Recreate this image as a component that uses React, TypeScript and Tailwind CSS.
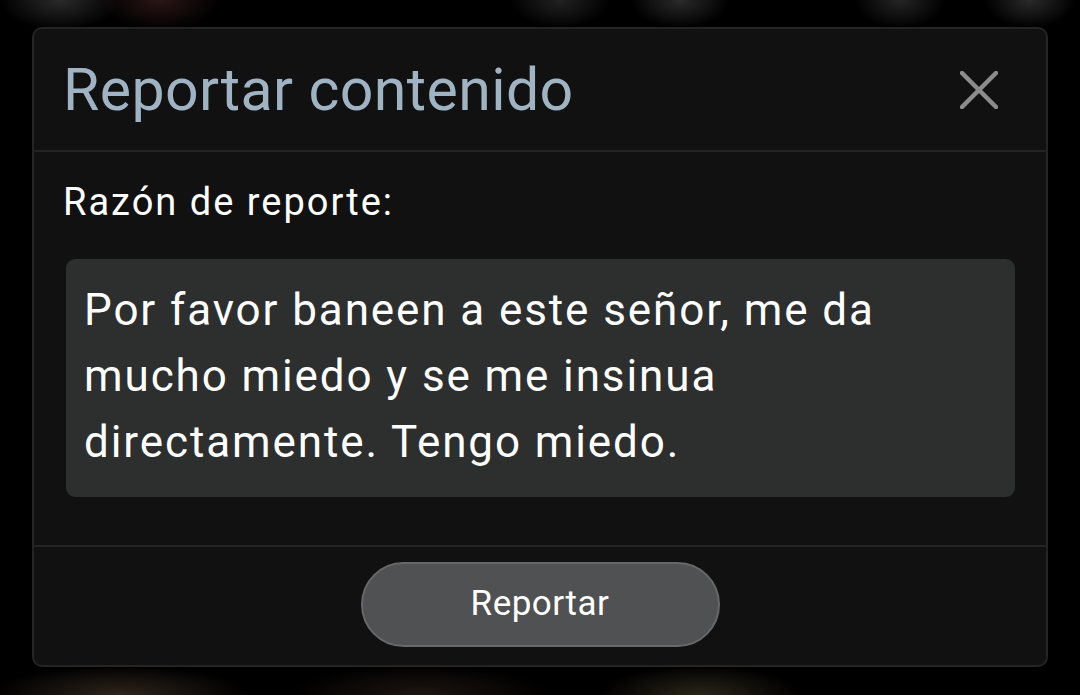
import { useState } from 'react';

const reportText =
  'Por favor baneen a este señor, me da mucho miedo y se me insinua directamente. Tengo miedo.';

function CloseIcon() {
  return (
    <svg width="38" height="38" viewBox="0 0 38 38" fill="none" aria-hidden="true">
      <path d="M2 2L36 36M36 2L2 36" stroke="#8c8c8c" strokeWidth="4.5" strokeLinecap="round" />
    </svg>
  );
}

export default function App() {
  const [open, setOpen] = useState(true);

  return (
    <div
      className="h-[695px] w-[1080px] overflow-hidden bg-black bg-[radial-gradient(ellipse_60px_30px_at_60px_0px,#2a2a2a,transparent),radial-gradient(ellipse_60px_30px_at_160px_0px,#2a1515,transparent),radial-gradient(ellipse_50px_28px_at_560px_0px,#222,transparent),radial-gradient(ellipse_50px_28px_at_680px_0px,#2a2a2a,transparent),radial-gradient(ellipse_45px_28px_at_900px_0px,#252525,transparent),radial-gradient(ellipse_45px_28px_at_1030px_0px,#2a2a2a,transparent),radial-gradient(ellipse_130px_30px_at_120px_695px,#2e241b,transparent),radial-gradient(ellipse_130px_30px_at_420px_695px,#1e1510,transparent),radial-gradient(ellipse_100px_30px_at_700px_695px,#2b2519,transparent)] pl-[32px] pt-[27px]"
      style={{ fontFamily: 'Roboto, "Noto Sans", "Liberation Sans", sans-serif' }}
    >
      {open ? (
        <section className="w-[1016px] overflow-hidden rounded-[10px] border-2 border-[#242424] bg-[#111111]">
          <header className="flex h-[123px] items-center justify-between border-b-2 border-[#232323] pl-[29px] pr-[48px]">
            <h2 className="text-[59px] font-normal leading-[70px] tracking-[0.4px] text-[#9fb3c3]">
              Reportar contenido
            </h2>
            <button type="button" aria-label="Cerrar" onClick={() => setOpen(false)}>
              <CloseIcon />
            </button>
          </header>

          <div className="border-b-2 border-[#232323] pb-[48px] pl-[29px] pr-[31px] pt-[28px]">
            <p className="text-[38px] leading-[44px] tracking-[2px] text-white">Razón de reporte:</p>
            <div className="ml-[3px] mt-[35px] h-[238px] rounded-[9px] bg-[#2d2e2e] pl-[18px] pr-[22px] pt-[18px] text-[44px] leading-[66px] tracking-[1.9px] text-white">
              {reportText}
            </div>
          </div>

          <footer className="flex justify-center pb-[18px] pt-[15px]">
            <button
              type="button"
              className="h-[85px] w-[359px] rounded-full border-2 border-[#686868] bg-[#505152] text-[35px] tracking-[0.5px] text-white"
            >
              Reportar
            </button>
          </footer>
        </section>
      ) : null}
    </div>
  );
}
